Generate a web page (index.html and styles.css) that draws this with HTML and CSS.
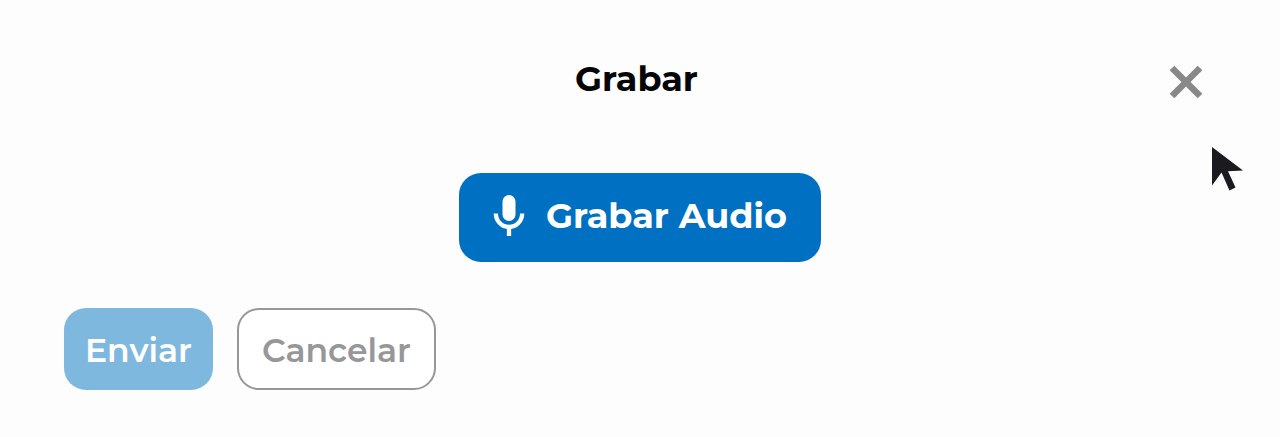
FILE: index.html
```html
<!DOCTYPE html>
<html lang="es">
<head>
<meta charset="utf-8">
<meta name="viewport" content="width=device-width, initial-scale=1">
<title>Grabar</title>
<link rel="stylesheet" href="styles.css">
</head>
<body>
<main class="dialog">
  <header class="header">
    <h1 class="title">Grabar</h1>
    <button class="close" type="button" aria-label="Cerrar">
      <svg width="34" height="34" viewBox="0 0 34 34"><path d="M3 3 31 31M31 3 3 31" fill="none" stroke="currentColor" stroke-width="6.6"/></svg>
    </button>
  </header>
  <button class="button record" type="button">
    <svg class="mic" width="32" height="42" viewBox="0 0 32 42" aria-hidden="true"><rect x="9.5" y="0" width="13" height="26" rx="6.5" fill="currentColor"/><path d="M2.8 18.500C3 26 8.500 32 16 32S29 26 29.200 18.500M16 32v9" fill="none" stroke="currentColor" stroke-width="4.3"/></svg>
    <span>Grabar Audio</span>
  </button>
  <footer class="actions">
    <button class="button send" type="button" disabled>Enviar</button>
    <button class="button cancel" type="button">Cancelar</button>
  </footer>
</main>
<svg class="pointer" width="34" height="46" viewBox="0 0 34 46" aria-hidden="true"><path d="M2 0V38.500L11.500 25.500 19.500 43.500 25.500 40.500 18 24.200 33 23.500Z" fill="#1b1b1f"/></svg>
</body>
</html>
```
FILE: styles.css
```css
* { box-sizing: border-box; }
body {
  margin: 0;
  background: #fdfdfd;
  font-family: Montserrat, "Open Sans", sans-serif;
}
.dialog {
  display: flex;
  flex-direction: column;
  padding: 55px 64px 48px;
}
.header {
  display: grid;
  grid-template-columns: 40px 1fr 47px;
  align-items: center;
}
.title {
  grid-column: 2;
  margin: 0;
  text-align: center;
  font-size: 35px;
  line-height: 48px;
  font-weight: 700;
  color: #050505;
}
.close {
  display: flex;
  margin-top: 5px;
  padding: 0;
  border: 0;
  background: none;
  color: #888;
}
.button {
  border: 0;
  border-radius: 22px;
  font-family: inherit;
  font-weight: 600;
  line-height: 48px;
}
.record {
  display: flex;
  align-items: center;
  align-self: center;
  gap: 21px;
  height: 89px;
  margin-top: 70px;
  padding: 0 34px 4px;
  background: #0070c2;
  color: #fff;
  font-size: 35px;
  font-weight: 700;
}
.actions {
  display: flex;
  gap: 24px;
  margin-top: 46px;
}
.send, .cancel {
  height: 82px;
  padding: 2px 21px 0;
  font-size: 33px;
}
.send { background: #7fb8df; color: #fff; }
.cancel {
  padding: 2px 23px 0;
  border: 2px solid #979799;
  background: #fff;
  color: #979799;
}
.pointer {
  position: absolute;
  top: 147px;
  right: 36px;
}
```
